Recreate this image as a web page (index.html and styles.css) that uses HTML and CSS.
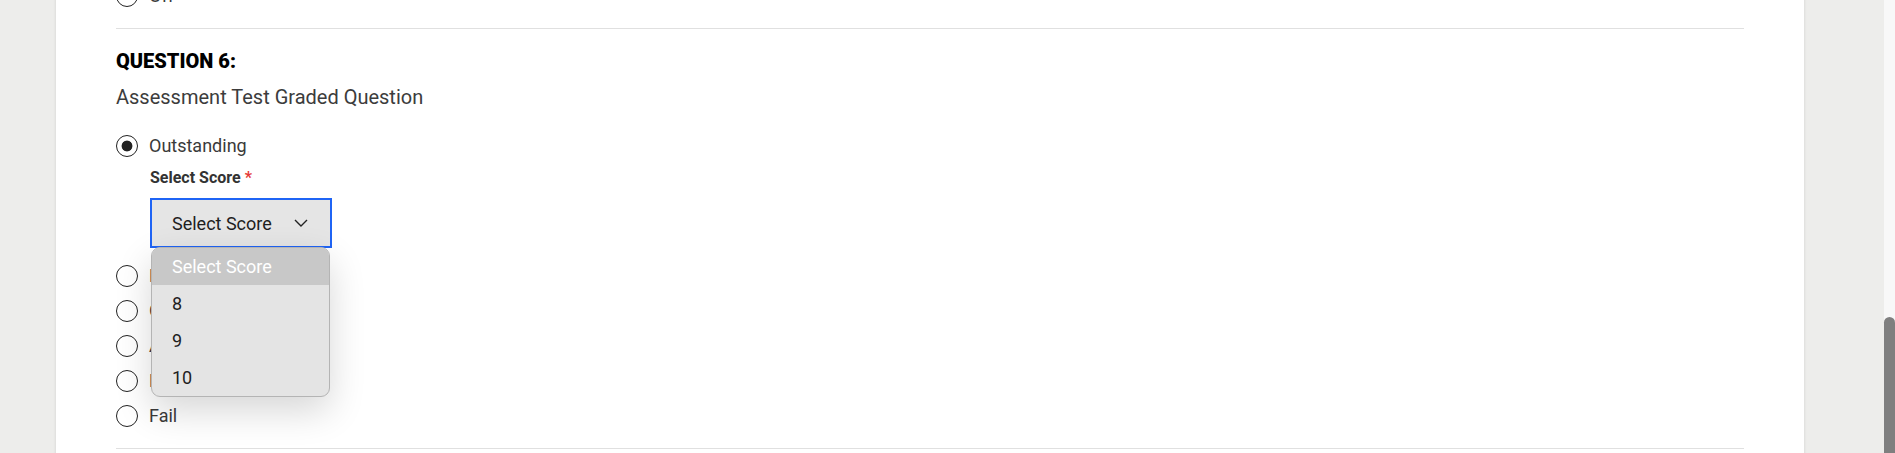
FILE: index.html
```html
<!DOCTYPE html>
<html lang="en">
<head>
    <meta charset="UTF-8">
    <meta name="viewport" content="width=device-width, initial-scale=1.0">
    <title>Assessment</title>
    <link rel="stylesheet" href="styles.css">
</head>
<body>
    <div class="page">
        <main class="card">
            <section class="question question-prev">
                <label class="option"><input type="radio" name="q5"> <span>Off</span></label>
            </section>

            <section class="question">
                <h2 class="q-title">QUESTION 6:</h2>
                <p class="q-text">Assessment Test Graded Question</p>

                <label class="option"><input type="radio" name="q6" checked> <span>Outstanding</span></label>
                <div class="score">
                    <p class="score-label">Select Score <span class="req">*</span></p>
                    <div class="select-wrap">
                        <div class="select-box">
                            <span>Select Score</span>
                            <svg width="14" height="8" viewBox="0 0 14 8"><path d="M1 1 L7 7 L13 1" fill="none" stroke="#222" stroke-width="1.4"/></svg>
                        </div>
                        <ul class="select-list">
                            <li class="active">Select Score</li>
                            <li>8</li>
                            <li>9</li>
                            <li>10</li>
                        </ul>
                    </div>
                </div>
                <label class="option"><input type="radio" name="q6"> <span>Excellent</span></label>
                <label class="option"><input type="radio" name="q6"> <span>Good</span></label>
                <label class="option"><input type="radio" name="q6"> <span>Average</span></label>
                <label class="option"><input type="radio" name="q6"> <span>Needs Improvement</span></label>
                <label class="option"><input type="radio" name="q6"> <span>Fail</span></label>
            </section>
            <section class="question"></section>
        </main>
    </div>
    <div class="scrollbar">
        <div class="thumb"></div>
    </div>
</body>
</html>
```

FILE: styles.css
```css
body {
    margin: 0;
    height: 453px;
    overflow: hidden;
    display: flex;
    background-color: #ededeb;
    font-family: Roboto, "Liberation Sans", Arial, sans-serif;
}

.page {
    flex: 1;
    padding-left: 56px;
    padding-right: 80px;
}

.card {
    background: white;
    height: 100%;
    padding: 0 60px;
    margin-top: -22px;
    min-height: 500px;
    box-shadow: 0 0 3px rgba(0, 0, 0, 0.12);
}

.scrollbar {
    width: 11px;
    background: #f8f8f8;
    padding-top: 317px;
}

.thumb {
    height: 200px;
    background: #7f7f7f;
    border-radius: 6px 6px 0 0;
}

.question {
    border-top: 1px solid #e0e0e0;
    padding: 20px 0 15px;
}

.question-prev {
    border-top: none;
    padding-top: 0;
}

.q-title {
    margin: 0;
    font-size: 20px;
    line-height: 24px;
    font-weight: 900;
    color: #000;
}

.q-text {
    margin: 12px 0 19px;
    font-size: 20px;
    line-height: 24px;
    color: #3c3c3c;
}

.option {
    display: flex;
    align-items: center;
    height: 35px;
    font-size: 18px;
    color: #3a3a3a;
}

.option input {
    appearance: none;
    -webkit-appearance: none;
    width: 22px;
    height: 22px;
    margin: 0 11px 0 0;
    border: 1.5px solid #222;
    border-radius: 50%;
    background: white;
}

.option input:checked {
    background: radial-gradient(circle, #222 0 5px, white 5.8px);
}

.score {
    padding-left: 34px;
    margin: 5px 0 10px;
}

.score-label {
    margin: 0 0 10px;
    font-size: 16px;
    line-height: 20px;
    font-weight: 700;
    color: #333;
}

.req {
    color: #e53935;
}

.select-wrap {
    position: relative;
    width: 182px;
}

.select-box {
    height: 50px;
    box-sizing: border-box;
    border: 2px solid #1f64f5;
    background: #e5e5e5;
    display: flex;
    align-items: center;
    justify-content: space-between;
    padding: 0 22px 0 20px;
    font-size: 18px;
    color: #1e1e1e;
}

.select-list {
    position: absolute;
    top: 49px;
    left: 1px;
    width: 179px;
    box-sizing: border-box;
    margin: 0;
    padding: 0;
    list-style: none;
    background: #e4e4e4;
    border: 1px solid #b4b4b4;
    border-radius: 9px;
    overflow: hidden;
    box-shadow: 0 14px 36px rgba(0, 0, 0, 0.16);
    z-index: 2;
}

.select-list li {
    height: 37px;
    line-height: 37px;
    padding-left: 20px;
    font-size: 18px;
    color: #1e1e1e;
}

.select-list li.active {
    background: #c8c8c8;
    color: white;
}
```
